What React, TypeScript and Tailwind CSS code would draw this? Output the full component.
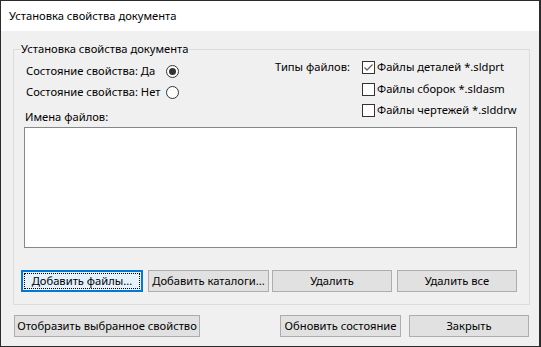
import React from "react";

const font = { fontFamily: '"Noto Sans", "Liberation Sans", sans-serif' };

function Btn({ children, w, focused }: { children: React.ReactNode; w: string; focused?: boolean }) {
  if (focused) {
    return (
      <div className={`${w} h-[22px] border-2 border-[#0078d7] bg-[#e5f1fb] p-px flex`}>
        <div className="flex-1 border border-dotted border-black flex items-center justify-center leading-none whitespace-nowrap">
          {children}
        </div>
      </div>
    );
  }
  return (
    <div className={`${w} h-[22px] border border-[#adadad] bg-[#e1e1e1] flex items-center justify-center leading-none whitespace-nowrap`}>
      {children}
    </div>
  );
}

function Radio({ checked }: { checked?: boolean }) {
  return (
    <div className="w-[13px] h-[13px] shrink-0 rounded-full border border-[#333] bg-white flex items-center justify-center">
      {checked && <div className="w-[7px] h-[7px] rounded-full bg-[#333]" />}
    </div>
  );
}

function Check({ checked }: { checked?: boolean }) {
  return (
    <div className="w-[13px] h-[13px] shrink-0 border border-[#333] bg-white flex items-center justify-center">
      {checked && (
        <svg width="11" height="11" viewBox="0 0 11 11">
          <polyline points="1.5,5.5 4,8 9.5,2.5" fill="none" stroke="#666" strokeWidth="1.3" />
        </svg>
      )}
    </div>
  );
}

export default function App() {
  return (
    <div
      style={font}
      className="w-[541px] h-[347px] border-l border-t border-r-2 border-b border-[#2b2b2b] bg-[#f0f0f0] text-black text-[11.2px] flex flex-col"
    >
      <div className="h-[30px] bg-white flex items-center pl-[8px]">Установка свойства документа</div>
      <fieldset className="ml-[12px] mt-[10px] w-[517px] border border-[#dcdcdc] pl-[7px] pb-[12px]">
        <legend className="h-[16px] leading-[16px] whitespace-nowrap">Установка свойства документа</legend>
        <div className="flex">
          <div className="w-[254px] shrink-0 pt-[4px] flex flex-col">
            <div className="h-[21px] flex items-center ml-[5px]">
              <span className="w-[140px] shrink-0 whitespace-nowrap">Состояние свойства: Да</span>
              <Radio checked />
            </div>
            <div className="h-[21px] flex items-center ml-[5px]">
              <span className="w-[140px] shrink-0 whitespace-nowrap">Состояние свойства: Нет</span>
              <Radio />
            </div>
            <div className="h-[16px] mt-[6px] ml-[4px] flex items-center whitespace-nowrap">Имена файлов:</div>
          </div>
          <div className="flex">
            <div className="w-[87px] shrink-0 h-[21.5px] flex items-center whitespace-nowrap">Типы файлов:</div>
            <div className="flex flex-col">
              <div className="h-[21.5px] flex items-center gap-[2px] whitespace-nowrap">
                <Check checked />
                <span>Файлы деталей *.sldprt</span>
              </div>
              <div className="h-[21.5px] flex items-center gap-[2px] whitespace-nowrap">
                <Check />
                <span>Файлы сборок *.sldasm</span>
              </div>
              <div className="h-[21.5px] flex items-center gap-[2px] whitespace-nowrap">
                <Check />
                <span>Файлы чертежей *.slddrw</span>
              </div>
            </div>
          </div>
        </div>
        <div className="ml-[3px] mt-[2px] w-[493px] h-[121px] border border-[#828790] bg-white" />
        <div className="flex mt-[22px]">
          <Btn w="w-[122px]" focused>Добавить файлы...</Btn>
          <div className="ml-[5px]"><Btn w="w-[121px]">Добавить каталоги...</Btn></div>
          <div className="ml-[3px]"><Btn w="w-[120px]">Удалить</Btn></div>
          <div className="ml-[5px]"><Btn w="w-[120px]">Удалить все</Btn></div>
        </div>
      </fieldset>
      <div className="flex ml-[13px] mt-[10px]">
        <Btn w="w-[186px]">Отобразить выбранное свойство</Btn>
        <div className="ml-[80px]"><Btn w="w-[121px]">Обновить состояние</Btn></div>
        <div className="ml-[8px]"><Btn w="w-[120px]">Закрыть</Btn></div>
      </div>
    </div>
  );
}
